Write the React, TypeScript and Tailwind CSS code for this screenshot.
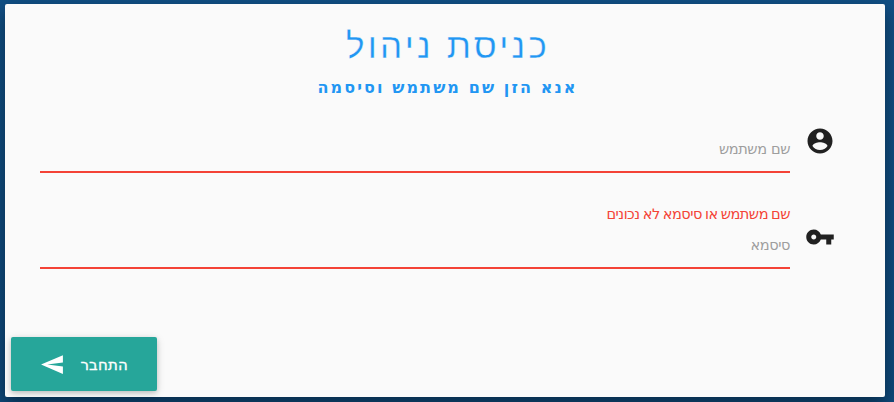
function AccountIcon() {
  return (
    <svg viewBox="0 0 24 24" className="size-[30px] fill-[#212121]">
      <path d="M12 2C6.48 2 2 6.48 2 12s4.48 10 10 10 10-4.48 10-10S17.52 2 12 2zm0 3c1.66 0 3 1.34 3 3s-1.34 3-3 3-3-1.34-3-3 1.34-3 3-3zm0 14.2c-2.5 0-4.71-1.28-6-3.22.03-1.99 4-3.08 6-3.08 1.99 0 5.97 1.09 6 3.08-1.29 1.94-3.5 3.22-6 3.22z" />
    </svg>
  );
}

function KeyIcon() {
  return (
    <svg viewBox="0 0 24 24" className="size-[30px] fill-[#212121]">
      <path d="M12.65 10C11.83 7.67 9.61 6 7 6c-3.31 0-6 2.69-6 6s2.69 6 6 6c2.61 0 4.83-1.67 5.65-4H17v4h4v-4h2v-4H12.65zM7 14c-1.1 0-2-.9-2-2s.9-2 2-2 2 .9 2 2-.9 2-2 2z" />
    </svg>
  );
}

export default function App() {
  return (
    <div dir="rtl" className="flex h-[402px] w-[894px] justify-end overflow-hidden bg-linear-to-b from-[#115086] to-[#0f4a7c] pt-1 pl-[5px] font-['DejaVu_Sans',sans-serif]">
      <main className="flex h-[393px] w-[880px] flex-col rounded-xs bg-[#fafafa] shadow-[0_8px_17px_0_rgba(0,0,0,0.25),0_6px_20px_0_rgba(0,0,0,0.22)]">
        <h1 className="mt-[19px] pl-[6px] text-center font-['Liberation_Sans',sans-serif] text-[35px] leading-[46px] tracking-[3.2px] text-[#2196f3] [-webkit-text-stroke:0.3px_#fafafa]">כניסת ניהול</h1>
        <h2 className="mt-[7px] pl-[5px] text-center text-[16px] leading-[24px] font-bold tracking-[2.1px] text-[#2196f3]">אנא הזן שם משתמש וסיסמה</h2>

        <form className="flex flex-1 flex-col">
          <div className="mt-[26px] flex h-[47px] gap-[15px] pr-[50px] pl-[35px]">
            <AccountIcon />
            <div className="flex flex-1 flex-col justify-end border-b-2 border-[#f44336]">
              <label className="mb-[12px] text-[14.5px] leading-5 tracking-[-0.4px] text-[#9e9e9e]">שם משתמש</label>
            </div>
          </div>
          <div className="mt-[31px] pr-[95px] text-[14.5px] leading-5 tracking-[-0.5px] [word-spacing:-1px] text-[#f44336]">שם משתמש או סיסמא לא נכונים</div>
          <div className="-mt-[2px] flex h-[47px] gap-[15px] pr-[50px] pl-[35px]">
            <KeyIcon />
            <div className="flex flex-1 flex-col justify-end border-b-2 border-[#f44336]">
              <label className="mb-[12px] text-[14.5px] leading-5 tracking-[-0.4px] text-[#9e9e9e]">סיסמא</label>
            </div>
          </div>
          <button type="button" className="mt-auto mr-auto mb-[6px] ml-[6px] flex h-[54px] w-[146px] items-center rounded-xs bg-[#26a69a] pr-[29px] text-white shadow-[0_2px_5px_0_rgba(0,0,0,0.16),0_2px_10px_0_rgba(0,0,0,0.12)]">
            <span className="w-[47px] pt-[2px] whitespace-nowrap text-[15px] tracking-[0.2px] [-webkit-text-stroke:0.3px_white]">התחבר</span>
            <svg viewBox="0 0 24 24" className="mr-4 size-[25px] -scale-x-100 fill-white">
              <path d="M2.01 21L23 12 2.01 3 2 10l15 2-15 2z" />
            </svg>
          </button>
        </form>
      </main>
    </div>
  );
}
